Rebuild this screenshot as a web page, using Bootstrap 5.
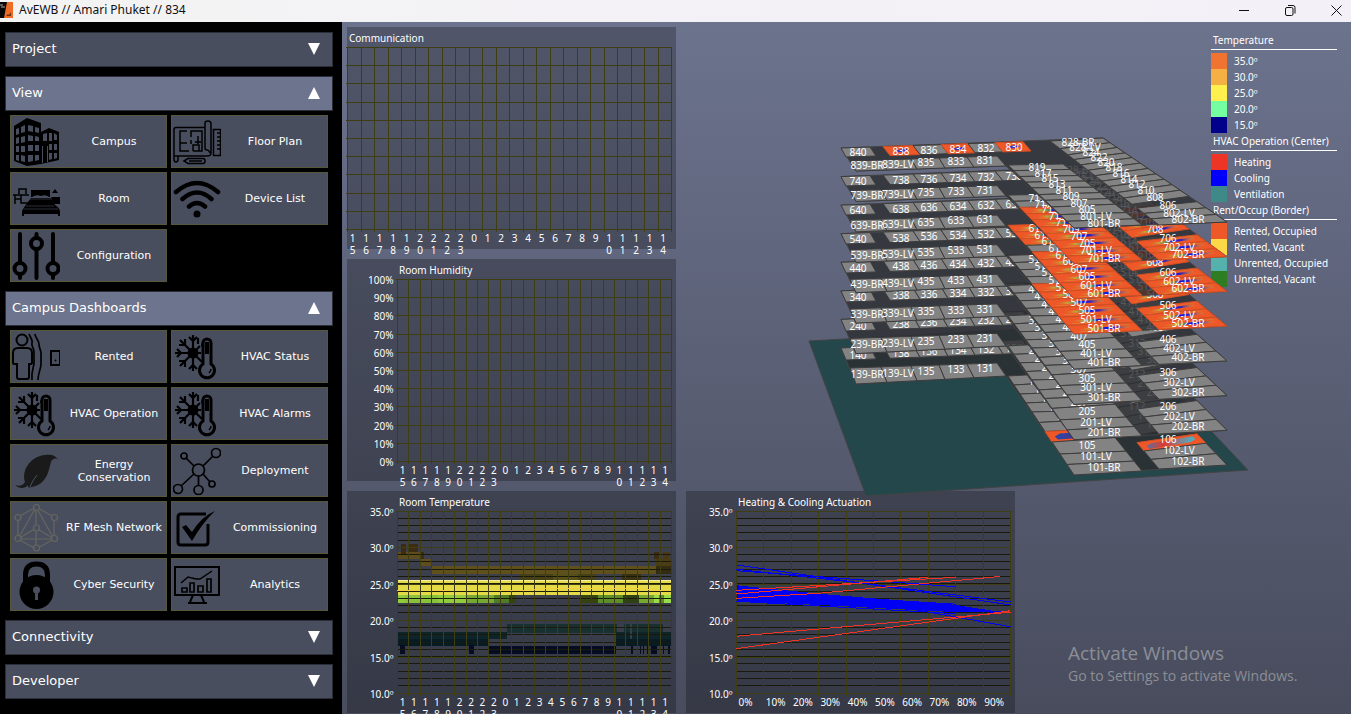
<!DOCTYPE html>
<html lang="en">
<head>
<meta charset="utf-8">
<meta name="viewport" content="width=device-width, initial-scale=1">
<title>AvEWB // Amari Phuket // 834</title>
<link href="https://cdn.jsdelivr.net/npm/bootstrap@5.3.0/dist/css/bootstrap.min.css" rel="stylesheet">
<style>
  body { font-family: "DejaVu Sans", sans-serif; background: #000; color: #fff; }
  .titlebar { height: 22px; background: linear-gradient(90deg, #f3f3f3, #f4f0f8); color: #111; font: 12px/20px "Noto Sans", sans-serif; }
  .titlebar .caption { padding-left: 6px; }
  .titlebar button { width: 46px; height: 22px; border: 0; background: none; padding: 0 0 3px; line-height: 1; }
  .titlebar button:last-child { width: 38px; padding-left: 8px; }
  .sidebar { width: 342px; padding: 10px 9px 0 5px; gap: 9px; }
  .section-toggle { height: 35px; padding: 0 12px 2px 6px; border: 1px solid #2b2e38; border-radius: 0; background: #494e5e; color: #fff; font-size: 13px; }
  .section-toggle.open { background: #6d748d; }
  .section-toggle:hover { background: #6d748d; color: #fff; }
  .tiles { display: grid; grid-template-columns: 1fr 1fr; gap: 4px; padding: 4px 5px 0; }
  .tile { height: 53px; padding: 0 0 0 1px; border: 1px solid #57583a; border-radius: 0; background: #494e5e; color: #fff; font-size: 11px; line-height: 13px; }
  .tile:hover { background: #6d748d; color: #fff; }
  .tile svg { width: 48px; height: 48px; flex: none; stroke: #000; fill: none; stroke-width: 2; }
  .tile .caption { padding-left: 2px; }
  .scene { min-height: calc(100vh - 22px); background: linear-gradient(#6c738d, #484c5d); }
  .charts { display: grid; grid-template-columns: 329px 329px; align-content: start; gap: 10px; padding: 5px 0 0 5px; }
  .chart { width: 329px; height: 222px; background: rgba(0,0,0,.25); overflow: visible; display: block; grid-column: 1; }
  svg text { font: 10px "Noto Sans", sans-serif; fill: #fff; }
  .actuation { grid-column: 2; grid-row: 3; }
  .legend { top: 10px; right: 14px; width: 126px; font: 10px/16px "Noto Sans", sans-serif; }
  .legend h2 { font: inherit; line-height: 17px; margin: 0 0 3px; padding-left: 2px; border-bottom: 1px solid #fff; }
  .legend li { height: 16px; }
  .swatch { width: 16px; height: 16px; margin-right: 7px; }
  .building { left: 458px; top: 108px; width: 460px; height: 370px; pointer-events: none; }
  .notice { right: 46px; bottom: 28px; width: 237px; color: #8c8e96; font-family: "Open Sans", sans-serif; white-space: nowrap; }
  .notice .heading { font-size: 19px; line-height: 26px; }
  .notice .detail { font-size: 14px; line-height: 20px; }
</style>
</head>
<body class="vh-100 overflow-hidden">

<svg class="d-none">
  <symbol id="i-hvac" viewBox="0 0 48 48">
    <g stroke-width="2.2"><path d="M20 2v36M2 20h26M7 7l22 22M7 33l20-20M33 7l-4 4"/><path d="M16 4l4 4 4-4M16 36l4-4 4 4M4 16l4 4-4 4M6 12h6V6M6 28h6v6M28 12h4M25 5v6"/></g>
    <circle cx="20" cy="20" r="4.500" fill="#000"/>
    <path d="M30 31V10a4 4 0 0 1 8 0v21a7.500 7.500 0 1 1-8 0z" fill="#494e5e" stroke-width="3"/>
    <path d="M34 9v12" stroke-width="4"/><path d="M38 36c0 2-1 3-2 4" stroke-width="1.500"/>
  </symbol>
</svg>

<header class="titlebar d-flex align-items-start">
  <svg width="13" height="18" viewBox="0 0 13 18" aria-hidden="true"><path d="M0 2h13v16H0z" fill="#ef6c24"/><path d="M0 2h7L4 18H0z" fill="#080808"/><path d="M0 5h3M1 7h4" stroke="#aaa"/><path d="M6 16l2-2 1 1 2-3v4z" fill="#6b3010"/></svg>
  <span class="caption">AvEWB // Amari Phuket // 834</span>
  <div class="ms-auto d-flex">
    <button type="button" aria-label="Minimize"><svg width="11" height="11" stroke="#111"><path d="M0 5.500h10"/></svg></button>
    <button type="button" aria-label="Restore"><svg width="11" height="11" stroke="#111" fill="none"><rect x=".5" y="2.500" width="7.500" height="8" rx="1.500"/><path d="M3 .5h5q2 0 2 2v6"/></svg></button>
    <button type="button" aria-label="Close"><svg width="11" height="11" stroke="#111"><path d="M.5.5l10 10M10.500.5l-10 10"/></svg></button>
  </div>
</header>

<div class="d-flex">
<nav class="sidebar d-flex flex-column flex-shrink-0" aria-label="Main">
  <button type="button" class="btn section-toggle d-flex align-items-center justify-content-between"><span>Project</span><svg width="12" height="13" fill="#fff"><path d="M0 1h12L6 13z"/></svg></button>
  <section>
    <button type="button" class="btn section-toggle open w-100 d-flex align-items-center justify-content-between"><span>View</span><svg width="12" height="13" fill="#fff"><path d="M0 13h12L6 1z"/></svg></button>
    <div class="tiles">
      <button type="button" class="btn tile d-flex align-items-center">
        <svg viewBox="0 0 48 48"><path fill="#000" stroke="none" fill-rule="evenodd" d="M15 0L29 5v9l8-4 10 4v28l-18 4-14 2L2 43V8zM4 11v6l3-1v-6zM9 9v6l4-1V7zM4 20v6l3-1v-6zM9 19v6l4-1v-6zM4 28v6l3 0v-6zM9 28v6l4 0v-6zM4 37v5l3 1v-6zM9 37v6l4 1v-6zM16 7v6l5 1V8zM23 9v5l4 1v-5zM16 17v6l5 0v-5zM23 18v5h4v-4zM16 27v6h5v-6zM23 27v6h4v-6zM16 37v7l5-1v-6zM23 37v6l4-1v-5zM31 16v7h4v-8zM37 15v8h3v-8zM42 15v7h3v-5zM37 26v6h3v-6zM42 26v6h3v-6zM37 35v7l3-1v-6zM42 35v6l3-1v-5zM30 28v17h1V28zM35 28v16h1V28z"/></svg>
        <span class="caption flex-fill">Campus</span></button>
      <button type="button" class="btn tile d-flex align-items-center">
        <svg viewBox="0 0 48 48"><g stroke-width="1.500"><path d="M32 9.500H3q-2 0-2 2V41q0 3 2 3t2-3v-3h29q4 0 4-3V6q0-3-3-3t-3 2v25q0 2 2 2t3 3M1 38h4"/><path d="M14 13H7v20h9M20 33h9V13H18v6M7 25h7M18 14v5M18 22v4M20 18M25 18v8M22 24h6M20 33v-6h6v6"/><path d="M40.500 11.500h7v26h-7zM44 15h3M44 19h3M44 23h3M44 27h3M44 31h3"/><path d="M11 43l4-2.500h15q2 0 2 2.500t-2 2.500H15zM16 43h13"/></g></svg>
        <span class="caption flex-fill">Floor Plan</span></button>
      <button type="button" class="btn tile d-flex align-items-center">
        <svg viewBox="0 0 48 48"><path d="M7 19v-5h7v5M1 20h16M3 20v9M9 20v8h7M3 24h6" stroke-width="1.500"/><path fill="#000" stroke="none" d="M19 15h19v7h-1q-3-3-8-1-5-2-9 1h-1zM19 23h20l4 7q4 2 5 6v5h-2v-2H12v2h-2v-5l3-5zM43 14l3 4h-6zM39 22h9v7h-6z"/><path d="M18 24h21M14 31h28M12 34h34" stroke="#494e5e" stroke-width=".6"/></svg>
        <span class="caption flex-fill">Room</span></button>
      <button type="button" class="btn tile d-flex align-items-center">
        <svg viewBox="0 0 48 48"><g stroke-width="4.500" stroke-linecap="round"><path d="M3 17q21-18 42 0M9.500 24q14.500-13 29 0M16 31.500q8-7 16 0"/></g><circle cx="24" cy="39" r="3.500" fill="#000" stroke="none"/></svg>
        <span class="caption flex-fill">Device List</span></button>
      <button type="button" class="btn tile d-flex align-items-center">
        <svg viewBox="0 0 48 48"><g stroke-width="4" stroke-linecap="round"><path d="M8 2v28M8 43v3M24.500 2v3M24.500 18v28M41 2v28M41 43v3"/><circle cx="8" cy="36.500" r="5.500"/><circle cx="24.500" cy="11.500" r="5.500"/><circle cx="41" cy="36.500" r="5.500"/></g></svg>
        <span class="caption flex-fill">Configuration</span></button>
    </div>
  </section>
  <section>
    <button type="button" class="btn section-toggle open w-100 d-flex align-items-center justify-content-between"><span>Campus Dashboards</span><svg width="12" height="13" fill="#fff"><path d="M0 13h12L6 1z"/></svg></button>
    <div class="tiles">
      <button type="button" class="btn tile d-flex align-items-center">
        <svg viewBox="0 0 48 48"><circle cx="10" cy="7" r="5.500"/><path d="M6 15h9q5 0 5 5v10q0 1-2 1h-1v13q0 2-2 2H7q-2 0-2-2V31H3q-2 0-2-1V20q0-5 5-5z"/><path d="M17 1c1 3 4 6 3 9s2 5 2 9v11c0 4-3 8-2 17M23 1c0 4 4 6 4 10s2 6 2 9v11c0 5-3 9-3 16" stroke-width="1.700"/><path d="M39 18h9v14h-9z"/><circle cx="43.500" cy="27.500" r="1" fill="#000" stroke="none"/></svg>
        <span class="caption flex-fill">Rented</span></button>
      <button type="button" class="btn tile d-flex align-items-center"><svg><use href="#i-hvac"/></svg><span class="caption flex-fill">HVAC Status</span></button>
      <button type="button" class="btn tile d-flex align-items-center"><svg><use href="#i-hvac"/></svg><span class="caption flex-fill">HVAC Operation</span></button>
      <button type="button" class="btn tile d-flex align-items-center"><svg><use href="#i-hvac"/></svg><span class="caption flex-fill">HVAC Alarms</span></button>
      <button type="button" class="btn tile d-flex align-items-center">
        <svg viewBox="0 0 48 48"><path fill="#1a1a1a" stroke="none" d="M3 38c5 2 8 0 10-3C9 22 20 9 33 8c6-1 11 0 13 5-2-3-6-1-7 2-2 6-3 22-19 25-3 1-5 0-4-2-3 4-9 4-13 0z"/><path d="M18 40q2-6 7-12" stroke="#494e5e" stroke-width="1"/></svg>
        <span class="caption flex-fill">Energy<br>Conservation</span></button>
      <button type="button" class="btn tile d-flex align-items-center">
        <svg viewBox="0 0 48 48"><g stroke-width="1.700"><circle cx="25.500" cy="23" r="6"/><circle cx="43" cy="6" r="4.500"/><circle cx="11" cy="9" r="3"/><circle cx="5" cy="42" r="4.500"/><circle cx="25.500" cy="43" r="4.500"/><circle cx="39" cy="37" r="3"/><path d="M30 19l10-10M13 11l8 8M21 27L8 39M25.500 29v10M30 27l7 8"/></g></svg>
        <span class="caption flex-fill">Deployment</span></button>
      <button type="button" class="btn tile d-flex align-items-center">
        <svg viewBox="0 0 48 48"><g stroke="#66665f" stroke-width="1.200"><path d="M24 3L6 13v22l18 10 18-10V13zM24 3v42M24 3L6 35h36zM6 35l18-11M42 35L24 24"/><g fill="#494e5e"><circle cx="24.500" cy="3.500" r="3"/><circle cx="6" cy="13.500" r="3"/><circle cx="42.500" cy="13.500" r="3"/><circle cx="6" cy="34.500" r="3"/><circle cx="42.500" cy="34.500" r="3"/><circle cx="24.500" cy="44" r="3"/><circle cx="24.500" cy="24" r="3"/></g></g></svg>
        <span class="caption flex-fill">RF Mesh Network</span></button>
      <button type="button" class="btn tile d-flex align-items-center">
        <svg viewBox="0 0 48 48"><path d="M33 10H8q-3 0-3 3v25q0 3 3 3h24q3 0 3-3V20" stroke-width="3"/><path fill="#000" stroke="none" d="M9 23l4-2 6 7Q29 12 42 7 30 18 19 37z"/></svg>
        <span class="caption flex-fill">Commissioning</span></button>
      <button type="button" class="btn tile d-flex align-items-center">
        <svg viewBox="0 0 48 48"><path d="M13.500 21V14q0-11 11-11t11 11v7" stroke-width="5"/><circle cx="24.500" cy="31" r="17" fill="#000" stroke="none"/><circle cx="24.500" cy="29" r="3.500" fill="#494e5e" stroke="none"/><path d="M24.500 30v9" stroke="#494e5e" stroke-width="3"/></svg>
        <span class="caption flex-fill">Cyber Security</span></button>
      <button type="button" class="btn tile d-flex align-items-center">
        <svg viewBox="0 0 48 48"><path d="M2 6h44v28H2zM20 34l-3 7M28 34l3 7M15 42h19"/><path d="M8 22l7-6 8 2h4l12-8" stroke-width="1.500"/><path d="M9 27h5v4H9zM17 22h4v9h-4zM25 25h5v6h-5zM34 18h4v13h-4z" stroke-width="1.700"/></svg>
        <span class="caption flex-fill">Analytics</span></button>
    </div>
  </section>
  <button type="button" class="btn section-toggle d-flex align-items-center justify-content-between"><span>Connectivity</span><svg width="12" height="13" fill="#fff"><path d="M0 1h12L6 13z"/></svg></button>
  <button type="button" class="btn section-toggle d-flex align-items-center justify-content-between"><span>Developer</span><svg width="12" height="13" fill="#fff"><path d="M0 1h12L6 13z"/></svg></button>
</nav>

<main class="scene flex-fill position-relative overflow-hidden">
  <div class="charts position-absolute">
    <svg class="chart" id="communication"></svg>
    <svg class="chart" id="humidity"></svg>
    <svg class="chart" id="temperature"></svg>
    <svg class="chart actuation" id="actuation"></svg>
  </div>

  <aside class="legend position-absolute">
    <h2>Temperature</h2>
    <ul class="list-unstyled m-0" data-keys="35.0º|#f0732f,30.0º|#f4b042,25.0º|#fff04e,20.0º|#74ffa0,15.0º|#00008b"></ul>
    <h2>HVAC Operation (Center)</h2>
    <ul class="list-unstyled m-0" data-keys="Heating|#ee3424,Cooling|#0000fb,Ventilation|#3f8988"></ul>
    <h2>Rent/Occup (Border)</h2>
    <ul class="list-unstyled m-0" data-keys="Rented; Occupied|#ee5728,Rented; Vacant|#fcd849,Unrented; Occupied|#55b1ab,Unrented; Vacant|#2f7d22"></ul>
  </aside>

  <svg class="building position-absolute" id="building" viewBox="800 130 460 370" role="img" aria-label="Building floors and rooms">
    <defs>
      <linearGradient id="cool"><stop offset="0" stop-color="#ee5728" stop-opacity="0"/><stop offset=".25" stop-color="#c5a43a"/><stop offset=".42" stop-color="#5d8a60"/><stop offset=".52" stop-color="#1515e8"/><stop offset=".7" stop-color="#2a20c0"/><stop offset="1" stop-color="#d8b238" stop-opacity=".2"/></linearGradient>
      <linearGradient id="warm"><stop offset="0" stop-color="#5f6fa0"/><stop offset=".35" stop-color="#e03a2c"/><stop offset=".65" stop-color="#8c7b8c"/><stop offset="1" stop-color="#46b5c8"/></linearGradient>
      <linearGradient id="dusk"><stop offset="0" stop-color="#2c46a8"/><stop offset=".6" stop-color="#4a3088"/><stop offset="1" stop-color="#a03050"/></linearGradient>
    </defs>
  </svg>

  <div class="notice position-absolute">
    <div class="heading">Activate Windows</div>
    <div class="detail">Go to Settings to activate Windows.</div>
  </div>
</main>
</div>

<script src="https://cdn.jsdelivr.net/npm/bootstrap@5.3.0/dist/js/bootstrap.bundle.min.js"></script>
<script>
const hours = [15,16,17,18,19,20,21,22,23,0,1,2,3,4,5,6,7,8,9,10,11,12,13,14];
const line = (x1, y1, x2, y2, c) => `<path d="M${x1} ${y1}L${x2} ${y2}" stroke="${c}" shape-rendering="crispEdges"/>`;
const text = (x, y, s, a = 'start') => `<text x="${x}" y="${y}" text-anchor="${a}">${s}</text>`;
const major = '#3e3e12', minor = '#191a0c', top0 = 20.5, bottom = 202.5, right = 324.5;

/* Axes shared by the four charts */
function frame(title, left, rows, cols, labels, sub) {
  let s = text(left + 1.5, 15, title);
  if (sub) for (let i = 0; i <= sub; i++) { const y = Math.round(top0 + i * 182 / sub) - .5; s += line(left, y, right, y, minor); }
  for (let i = 0; i <= rows; i++) {
    const y = Math.floor(top0 + i * 182 / rows) + .5;
    s += line(left - 2, y, right, y, major);
    if (labels) s += text(left - 4, y + 4, labels(i), 'end');
  }
  for (let i = 0; i <= cols; i++) { const x = Math.floor(left + i * (right - left) / cols) + .5; s += line(x, top0, x, bottom + 2, major); }
  return s;
}
function hourLabels(left) {
  return hours.map((h, i) => {
    const x = left + 5 + i * (right - left) / 24;
    return String(h).split('').map((d, k) => text(x, 215 + k * 12, d, 'middle')).join('');
  }).join('');
}
const put = (id, s) => document.getElementById(id).insertAdjacentHTML('beforeend', s);
put('communication', frame('Communication', .5, 10, 24) + hourLabels(.5));
put('humidity', frame('Room Humidity', 50.5, 10, 24, i => 100 - 10 * i + '%') + hourLabels(50.5));

/* Temperature histogram: hour range, degree range, colour */
const bins = [
 [0,822,23.4,25.4,'#e4da48'],[0,822,25.4,25.5,'#f4efa0'],[0,290,22.4,23.4,'#90cc3c'],[22,120,22.4,23.4,'#88c23a'],[205,290,22.4,23.4,'#76a834'],[290,335,22.4,23.4,'#4f7c22'],[335,356,22.4,23.4,'#35430f'],
 [547,600,22.4,23.4,'#35430f'],[600,676,22.4,23.4,'#5d8e28'],[676,724,22.4,23.4,'#2f4012'],[724,769,22.4,23.4,'#74a830'],[769,822,22.4,23.4,'#9adb48'],[785,800,22.4,23.4,'#5b8826'],
 [0,66,28.4,29.4,'#5d4c1c'],[11,26,28.9,30.5,'#3c2d12'],[34,62,29.3,30.5,'#3c2d12'],[66,102,27.4,28.4,'#5f4e1c'],[66,80,28.4,29.4,'#3c2d12'],
 [102,774,26.4,27.4,'#5f501c'],[774,822,26.4,27.4,'#332b12'],[776,822,27.4,28.4,'#4a3c14'],[770,784,28.4,29.4,'#3c2d12'],[796,818,28.4,29.4,'#4a3714'],
 [368,592,25.5,26.4,'#454016'],[466,542,25.5,26.4,'#565018'],[674,730,25.5,26.4,'#37310f'],
 [329,659,18.3,19.5,'#18302f'],[680,697,18.3,19.5,'#18302f'],[704,796,18.3,19.5,'#18302f'],[0,329,17.4,18.4,'#0d2529'],[654,697,17.4,18.4,'#0d2529'],[704,822,17.4,18.4,'#0d2529'],
 [0,274,16.4,17.4,'#071b25'],[654,822,16.4,17.4,'#071b25'],[8,23,15.4,16.6,'#060d22'],[215,230,15.4,16.6,'#060d22'],[274,654,15.4,16.5,'#060d22'],
 [701,707,15.4,16.5,'#060d22'],[726,730,15.4,16.5,'#060d22'],[736,740,15.4,16.5,'#060d22'],[748,752,15.4,16.5,'#060d22'],[760,778,15.4,16.5,'#060d22'],[796,799,15.4,16.5,'#060d22'],[812,816,15.4,16.5,'#060d22']
];
const ty = t => 202 - (t - 10) * 7.28;
const bars = bins.map(([a, b, lo, hi, c]) => `<rect x="${50.5 + a / 3}" y="${ty(hi)}" width="${(b - a) / 3}" height="${ty(lo) - ty(hi)}" fill="${c}" shape-rendering="crispEdges"/>`).join('');
const deg = i => 35 - 5 * i + '.0º';
put('temperature', bars + frame('Room Temperature', 50.5, 5, 24, deg, 25)
  + '<path d="M50 99.500h23M85 99.500h18M150 99.500h25l20-2h100l12 2h15" fill="none" stroke="#f2cf3c" shape-rendering="crispEdges"/>' + hourLabels(50.5));

/* Actuation: percent, degrees */
const px = p => 50.5 + p * 2.74;
const path = (pts, attr) => `<path d="M${pts.map(([p, t]) => px(p) + ' ' + ty(t)).join('L')}" ${attr} shape-rendering="crispEdges"/>`;
const blue = [[[0,27.6],[100,22.1]],[[0,27],[48,25],[100,22.5]],[[0,26.8],[80,24.6]],[[0,24.7],[100,21]],[[0,24],[80,22.2]],[[0,22.6],[80,20.9]],[[20,23.2],[60,21.8],[100,19.1]],[[30,22.8],[97,21]]];
const red = [[[0,17.8],[100,21.1]],[[0,16.1],[100,21.3]],[[0,23.6],[70,25.9]],[[0,24.1],[80,25.9]],[[0,23],[30,23.7],[96,26]]];
let act = frame('Heating &amp; Cooling Actuation', 50.5, 5, 10, deg, 25);
act += path([[0,24.8],[25,23.8],[50,23],[78,22.2],[97,21.1],[80,21.1],[55,21.600],[30,22.1],[0,22.6]], 'fill="#0000f5"');
blue.forEach(l => act += path(l, 'fill="none" stroke="#0000f5"'));
red.forEach(l => act += path(l, 'fill="none" stroke="#ee3424"'));
for (let i = 0; i < 10; i++) act += text(52.5 + i * 27.3, 215, i * 10 + '%');
put('actuation', act);

/* Legend keys */
document.querySelectorAll('[data-keys]').forEach(ul => ul.dataset.keys.split(',').forEach(k => {
  const [name, colour] = k.split('|');
  ul.insertAdjacentHTML('beforeend', `<li class="d-flex"><span class="swatch" style="background:${colour}"></span>${name.replace(';', ',')}</li>`);
}));

/* Building: every plan point has an x, a height on floor 8 and a height on floor 1 */
const level = (p, k) => [p[0], p[2] + (p[1] - p[2]) * (k - 1) / 7];
const at = (p, k) => level(p, k).map(v => v.toFixed(1)).join(',');
const on = (a, b) => x => { const f = (x - a[0]) / (b[0] - a[0]); return [x, a[1] + (b[1] - a[1]) * f, a[2] + (b[2] - a[2]) * f]; };
const rooms = [];
function strip(names, e1, xs1, e2, xs2, labels) {
  names.forEach((n, i) => { if (n) rooms.push({ n, pts: [e1(xs1[i]), e1(xs1[i + 1]), e2(xs2[i + 1]), e2(xs2[i])], l: labels[i] }); });
}
const nTop = on([841,148,348], [1103,139,336]), nBot = on([846,157,360], [1031,151,353]);
strip(['40',null,'38','36','34','32','30'], nTop, [841,870,883,913,941,968,995,1023], nBot, [846,876,890,920,948,975,1003,1031],
  [[858,152,355],0,[901,151,353],[929,150,351],[958,149,350],[986,148,349],[1014,147,348]]);
const sTop = on([850,161,368], [997,156,363]), sBot = on([856,171,384], [1006,166,376]);
strip(['39-BR','39-LV','35','33','31'], sTop, [850,881,911,939,967,997], sBot, [856,887,917,945,974,1006],
  [[867,165,374],[898,164,373],[926,162,371],[956,161,369],[985,160,368]]);
const eIn = on([1050,141,338], [1159,225,469]), eOut = on([1103,138,336], [1227,222,465]);
strip(['28-BR','28-LV','24','22','20','18','16','14','12','10','08',null,'06','02-LV','02-BR'],
  eIn, [1050,1060,1068,1074,1081,1088,1095,1102,1109,1117,1124,1132,1137,1144,1151,1159],
  eOut, [1103,1110,1117,1125,1132,1140,1148,1156,1164,1172,1180,1189,1197,1206,1216,1227],
  [[1078,142,340],[1085,147,347],[1091,152,355],[1099,157,363],[1106,162,371],[1114,167,378],[1121,173,386],[1129,179,395],[1137,184,406],[1146,190,415],[1155,197,424],0,[1168,205,439],[1179,213,450],[1188,219,461]]);
const oOut = on([1008,165,376], [1074,228,475]), oIn = on([1063,164,373], [1142,225,471]);
strip(['19','17','15','13','11','09','07','05','01-LV','01-BR'],
  oOut, [1008,1014,1020,1026,1032,1039,1045,1052,1060,1067,1074],
  oIn, [1063,1070,1078,1085,1093,1100,1108,1115,1126,1134,1142],
  [[1037,167,381],[1043,173,389],[1050,178,398],[1057,184,407],[1064,190,416],[1071,196,425],[1079,203,435],[1087,209,445],[1096,216,456],[1104,223,467]]);

const occupied = {
  8: '38 34 30', 7: '15 13 11 09 07 05 01-LV 01-BR 14 12 10 08 06 02-LV 02-BR',
  6: '19 17 15 11 09 07 05 01-LV 01-BR 12 10 08 06 02-LV 02-BR', 5: '11 09 07 05 01-LV 01-BR 10 08 06 02-LV 02-BR', 1: '07 06'
};
const slab = [[841,148,348],[1103,138,336],[1227,222,465],[1074,228,475],[1006,166,376],[856,171,384]];

/* A label is skipped when rooms of the floors above cover all of it */
const inside = (x, y, q) => q.reduce((c, a, i) => { const b = q[(i + 1) % q.length];
  return (a[1] > y) !== (b[1] > y) && x < (b[0] - a[0]) * (y - a[1]) / (b[1] - a[1]) + a[0] ? !c : c; }, false);
const covered = (x, y, k) => { for (let j = k + 1; j <= 8; j++) if (rooms.some(r => inside(x, y, r.pts.map(p => level(p, j))))) return true; return false; };
function hidden(x, y, w, k) {
  for (let dx = -w / 2; dx <= w / 2; dx += w / 8) for (const dy of [-3, -1, 1, 3]) if (!covered(x + dx, y + dy, k)) return false;
  return true;
}

let out = '<path d="M809 341L866 496 1248 470 1110 324z" fill="#24474c" stroke="#444"/>';
for (let k = 1; k <= 8; k++) {
  const lit = (occupied[k] || '').split(' ');
  out += `<polygon points="${slab.map(p => at(p, k)).join(' ')}" fill="#2c2d31" fill-opacity=".8" stroke="#444"/>`;
  rooms.forEach(r => {
    const hot = lit.includes(r.n);
    out += `<polygon points="${r.pts.map(p => at(p, k)).join(' ')}" fill="${hot ? '#ee5728' : '#838383'}" stroke="${hot ? '#cf4f25' : '#3c3c3c'}"/>`;
    if (!hot) return;
    /* heat map: thin bands along the room */
    const q = r.pts.map(p => level(p, k));
    const wing = q[1][0] - q[0][0] < 20;
    const mid = (a, b) => [(a[0] + b[0]) / 2, (a[1] + b[1]) / 2];
    const [A, B] = wing ? [mid(q[0], q[1]), mid(q[2], q[3])] : [mid(q[0], q[3]), mid(q[1], q[2])];
    const band = (a, b, dy, w, f) => { const P = t => [A[0] + (B[0] - A[0]) * t, A[1] + (B[1] - A[1]) * t + dy]; const [x1, y1] = P(a), [x2, y2] = P(b);
      return `<polygon points="${x1},${y1} ${x1 + 5},${y1 - w} ${x2 - 3},${y2 - w} ${x2},${y2} ${x2 - 5},${y2 + w} ${x1 + 3},${y1 + w}" fill="${f}"/>`; };
    if (k === 1) out += band(.1, .9, 0, 3, r.n === '06' ? 'url(#warm)' : 'url(#dusk)');
    else if (!wing) out += band(.3, .75, 0, 1.5, '#3a30c8');
    else out += band(.1, .9, 0, 1.2, 'url(#cool)') + band(.5, .9, -2.5, .4, '#d0803a') + band(.1, .4, 2.5, .4, '#dc9038');
  });
  rooms.forEach(r => {
    const [x, y] = level(r.l, k);
    if (!hidden(x, y, r.n.length > 2 ? 32 : 16, k)) out += text(x, (y + 4).toFixed(1), k + r.n, 'middle');
  });
}
put('building', out);
</script>
</body>
</html>
